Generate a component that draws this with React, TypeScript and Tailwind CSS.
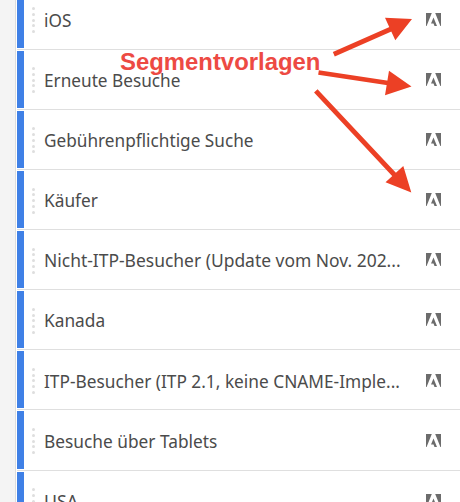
type Segment = { name: string; fit: string };

const segments: Segment[] = [
  { name: 'iOS', fit: 'scale-x-[0.93]' },
  { name: 'Erneute Besuche', fit: 'scale-x-[0.93]' },
  { name: 'Gebührenpflichtige Suche', fit: 'scale-x-[0.93]' },
  { name: 'Käufer', fit: 'scale-x-[0.935]' },
  { name: 'Nicht-ITP-Besucher (Update vom Nov. 202...', fit: 'scale-x-[0.943]' },
  { name: 'Kanada', fit: 'scale-x-[0.935]' },
  { name: 'ITP-Besucher (ITP 2.1, keine CNAME-Imple...', fit: 'scale-x-[0.934]' },
  { name: 'Besuche über Tablets', fit: 'scale-x-[0.935]' },
  { name: 'USA', fit: 'scale-x-[0.96]' },
];

function AdobeMark() {
  return (
    <svg className="mt-[23.3px] h-[13px] w-[15px] shrink-0" viewBox="0 0 15 13" fill="#6c6c6c">
      <path d="M0 0H5.8L.6 13H0ZM9.2 0H15V13H14.4ZM7.5 4.5L11 13H8.5L7.5 10.5H5Z" />
    </svg>
  );
}

function DragHandle() {
  return (
    <div className="ml-[7.5px] mt-[17.7px] flex w-[3px] shrink-0 flex-col gap-[2.75px]">
      {[0, 1, 2, 3, 4].map((dot) => (
        <span key={dot} className="h-[3px] w-[3px] shrink-0 rounded-full bg-[#dedede]" />
      ))}
    </div>
  );
}

function Row({ segment }: { segment: Segment }) {
  return (
    <li className="flex h-[60.15px] shrink-0 border-b border-[#dfdfdf]">
      <div className="mb-px mt-px w-[7px] shrink-0 bg-[#3f80e6]" />
      <DragHandle />
      <div className="ml-[9px] min-w-0 flex-1 pt-[16.3px]">
        <span className={`inline-block origin-left whitespace-pre text-[18.5px] leading-[27px] text-[#4b4b4b] ${segment.fit}`}>
          {segment.name}
        </span>
      </div>
      <AdobeMark />
      <div className="w-[19px] shrink-0" />
    </li>
  );
}

export default function App() {
  return (
    <main className="relative flex h-[502px] w-[460px] overflow-hidden bg-white font-['Noto_Sans',sans-serif]">
      <aside className="w-4 shrink-0 border-r border-[#dcdcdc] bg-[#f4f4f4]" />
      <ul className="-mt-[10.6px] ml-px flex min-w-0 flex-1 flex-col">
        {segments.map((segment) => (
          <Row key={segment.name} segment={segment} />
        ))}
      </ul>
      <span className="absolute left-[120px] top-[47px] origin-left scale-x-[0.995] whitespace-nowrap font-['Liberation_Sans',Arial,sans-serif] text-[24px] font-bold leading-[30px] text-[#ed4a43]">
        Segmentvorlagen
      </span>
      <svg className="absolute left-0 top-0 h-[502px] w-[460px]" viewBox="0 0 460 502" fill="#ec4025" stroke="#ec4025">
        <path d="M333.8 54.3L391 29M318.5 72.5L388 83M315.8 90.8L396 176.5" strokeWidth="4.8" />
        <path stroke="none" d="M385 17.7L412 19L395.3 40.2ZM389 70.7L411.5 86.5L385 95.3ZM403.3 166L411.3 192.5L385.5 182.3Z" />
      </svg>
    </main>
  );
}
